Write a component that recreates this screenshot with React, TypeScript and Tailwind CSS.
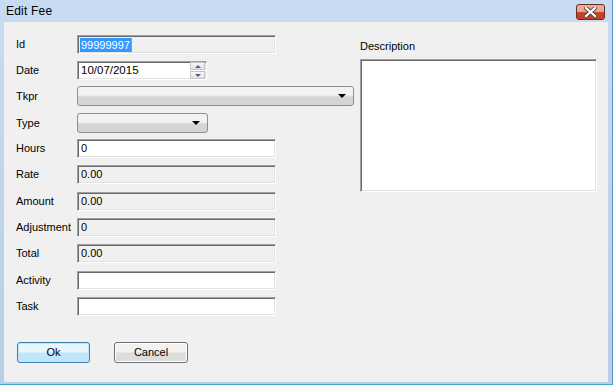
const sunken =
  "border border-t-[#a0a0a0] border-l-[#a0a0a0] border-b-white border-r-white shadow-[inset_1px_1px_0_#696969,inset_-1px_-1px_0_#e3e3e3]";

function Field({ value, readOnly, w = "w-[199px]" }: { value?: string; readOnly?: boolean; w?: string }) {
  return (
    <div className={`${w} h-[19px] ${sunken} ${readOnly ? "bg-[#f0f0f0]" : "bg-white"} flex items-center pl-[3px] text-[11px] text-black`}>
      {value}
    </div>
  );
}

function Arrow() {
  return <div className="w-0 h-0 border-l-[4px] border-r-[4px] border-t-[4px] border-l-transparent border-r-transparent border-t-black" />;
}

function Combo({ w }: { w: string }) {
  return (
    <div className={`${w} h-[20px] rounded-[3px] border border-[#8e8f8f] bg-gradient-to-b from-[#f2f2f2] from-45% to-[#d5d5d5] to-55% flex items-center justify-end pr-[7px]`}>
      <Arrow />
    </div>
  );
}

function Row({ label, mt, children }: { label: string; mt: string; children: React.ReactNode }) {
  return (
    <div className={`flex items-center ${mt}`}>
      <div className="w-[61px] text-[11px] text-black">{label}</div>
      {children}
    </div>
  );
}

export default function App() {
  return (
    <div className="w-[613px] h-[385px] bg-gradient-to-b from-[#c8dbf1] to-[#b8cfe9] border-b border-r border-b-[#3aa6d4] border-r-[#5d8fc4] flex flex-col overflow-hidden" style={{ fontFamily: '"Liberation Sans", Arial, sans-serif' }}>
      {/* title bar */}
      <div className="h-[22px] flex items-center pl-[6px] pr-[7px]">
        <span className="text-[12px] text-black tracking-[0.2px]">Edit Fee</span>
        <div className="ml-auto mt-[1px] w-[29px] h-[16px] rounded-[3px] border border-[#6d2a20] bg-gradient-to-b from-[#eaa99a] from-45% to-[#c63f27] to-55% flex items-center justify-center">
          <svg width="13" height="10" viewBox="0 0 13 10">
            <path d="M2 1 L11 9 M11 1 L2 9" stroke="#4a4a4a" strokeWidth="4" strokeLinecap="square" />
            <path d="M2 1 L11 9 M11 1 L2 9" stroke="#ffffff" strokeWidth="2.2" strokeLinecap="square" />
          </svg>
        </div>
      </div>

      {/* client */}
      <div className="flex-1 ml-[4px] mr-[4px] mb-[2px] bg-[#f0f0f0] flex relative">
        <div className="w-[356px] pl-[12px] pt-[13px] flex flex-col">
          <Row label="Id" mt="mt-0">
            <div className={`w-[199px] h-[19px] ${sunken} bg-[#f0f0f0] flex items-center pl-[2px] text-[11px]`}>
              <span className="bg-[#3399ff] text-white px-[1px] leading-[14px]">99999997</span>
              <span className="w-[1px] h-[14px] bg-[#e08a1e]" />
            </div>
          </Row>
          <Row label="Date" mt="mt-[7px]">
            <div className={`w-[130px] h-[19px] ${sunken} bg-white flex items-center pl-[3px] text-[11.5px] text-black`}>
              <span className="flex-1">10/07/2015</span>
              <div className="flex flex-col gap-[1px] mr-[1px]">
                <div className="w-[15px] h-[8px] border border-[#c5c5c5] bg-gradient-to-b from-[#f7f7f7] to-[#e2e2e2] flex items-center justify-center">
                  <div className="w-0 h-0 border-l-[3px] border-r-[3px] border-b-[3px] border-l-transparent border-r-transparent border-b-[#4a5d94]" />
                </div>
                <div className="w-[15px] h-[8px] border border-[#c5c5c5] bg-gradient-to-b from-[#f7f7f7] to-[#e2e2e2] flex items-center justify-center">
                  <div className="w-0 h-0 border-l-[3px] border-r-[3px] border-t-[3px] border-l-transparent border-r-transparent border-t-[#4a5d94]" />
                </div>
              </div>
            </div>
          </Row>
          <Row label="Tkpr" mt="mt-[6px]">
            <Combo w="w-[277px]" />
          </Row>
          <Row label="Type" mt="mt-[7px]">
            <Combo w="w-[131px]" />
          </Row>
          <Row label="Hours" mt="mt-[6px]">
            <Field value="0" />
          </Row>
          <Row label="Rate" mt="mt-[7px]">
            <Field value="0.00" readOnly />
          </Row>
          <Row label="Amount" mt="mt-[8px]">
            <Field value="0.00" readOnly />
          </Row>
          <Row label="Adjustment" mt="mt-[7px]">
            <Field value="0" readOnly />
          </Row>
          <Row label="Total" mt="mt-[7px]">
            <Field value="0.00" readOnly />
          </Row>
          <Row label="Activity" mt="mt-[8px]">
            <Field />
          </Row>
          <Row label="Task" mt="mt-[7px]">
            <Field />
          </Row>

          <div className="flex gap-[24px] mt-[26px] pl-[1px]">
            <button className="w-[73px] h-[21px] rounded-[3px] border border-[#3c7fb1] bg-gradient-to-b from-[#eaf6fd] from-45% to-[#bee6fd] to-55% shadow-[inset_0_0_0_1px_#c2e4f6] text-[11px] text-black">
              Ok
            </button>
            <button className="w-[74px] h-[21px] rounded-[3px] border border-[#707070] bg-gradient-to-b from-[#f2f2f2] from-45% to-[#dddddd] to-55% shadow-[inset_0_0_0_1px_#fcfcfc] text-[11px] text-black">
              Cancel
            </button>
          </div>
        </div>

        <div className="pt-[16px] flex flex-col">
          <div className="text-[11px] text-black">Description</div>
          <div className={`mt-[4px] w-[237px] h-[133px] ${sunken} bg-white`} />
        </div>
      </div>
    </div>
  );
}
